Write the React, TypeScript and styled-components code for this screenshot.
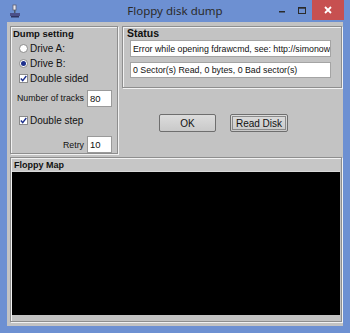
import React from "react";
import styled, { createGlobalStyle } from "styled-components";

const GlobalStyle = createGlobalStyle`
  html, body {
    margin: 0;
    padding: 0;
    background: #6b8ed0;
  }
  * {
    box-sizing: border-box;
  }
`;

const Window = styled.div`
  width: 350px;
  height: 333px;
  background: #6d90d2;
  display: flex;
  flex-direction: column;
  font-family: "Liberation Sans", Arial, sans-serif;
  color: #111;
  overflow: hidden;
  white-space: nowrap;
`;

const TitleBar = styled.div`
  height: 22px;
  display: flex;
  align-items: center;
  position: relative;
  padding-left: 9px;
`;

const Title = styled.div`
  position: absolute;
  left: 0;
  right: 0;
  top: 3px;
  text-align: center;
  font-family: "Noto Sans", "Open Sans", sans-serif;
  font-size: 11.5px;
  color: #2a2a2a;
  pointer-events: none;
`;

const Controls = styled.div`
  margin-left: auto;
  margin-right: 6px;
  display: flex;
  align-self: flex-start;
  align-items: flex-start;
`;

const CtrlButton = styled.div<{ $close?: boolean }>`
  width: ${({ $close }) => ($close ? "32px" : "20px")};
  height: 20px;
  display: flex;
  align-items: center;
  justify-content: center;
  background: ${({ $close }) => ($close ? "#c75050" : "transparent")};
`;

const Client = styled.div`
  flex: 1;
  margin: 0 7px 7px 7px;
  background: #c3c3c3;
  display: flex;
  flex-direction: column;
  padding: 4px 1px 4px 3px;
`;

const TopRow = styled.div`
  display: flex;
  gap: 4px;
`;

const Panel = styled.div<{ $w?: number; $h: number }>`
  width: ${({ $w }) => ($w ? `${$w}px` : "auto")};
  flex-shrink: 0;
  height: ${({ $h }) => $h}px;
  border: 1px solid #8e8e8e;
  box-shadow: inset 1px 1px 0 #f2f2f2, 1px 1px 0 #f2f2f2;
  display: flex;
  flex-direction: column;
  overflow: hidden;
`;

const PanelTitle = styled.div<{ $size?: number }>`
  font-weight: bold;
  font-size: ${({ $size }) => $size ?? 9.5}px;
  line-height: 11px;
  height: 12px;
  padding: 1px 0 0 2px;
  color: #111;
`;

const OptionRow = styled.div<{ $top?: number }>`
  height: 15px;
  margin-top: ${({ $top }) => $top ?? 0}px;
  display: flex;
  align-items: center;
  gap: 2px;
  padding-left: 8px;
  font-size: 10px;
`;

const Radio = styled.span<{ $on?: boolean }>`
  width: 9px;
  height: 9px;
  border-radius: 50%;
  background: #fff;
  border: 1px solid #8a8a8a;
  display: flex;
  align-items: center;
  justify-content: center;
  &::after {
    content: "";
    width: 5px;
    height: 5px;
    border-radius: 50%;
    background: ${({ $on }) => ($on ? "#1c2f8c" : "transparent")};
  }
`;

const Check = styled.span`
  width: 9px;
  height: 9px;
  background: #fff;
  border: 1px solid #8a8a8a;
  display: flex;
  align-items: center;
  justify-content: center;
`;

const FieldRow = styled.div<{ $top: number; $h: number }>`
  margin-top: ${({ $top }) => $top}px;
  height: ${({ $h }) => $h}px;
  display: flex;
  justify-content: flex-end;
  align-items: center;
  gap: 3px;
  padding-right: 5px;
  font-size: 8.8px;
`;

const NumInput = styled.div`
  width: 25px;
  height: 100%;
  background: #fff;
  border: 1px solid #9a9a9a;
  display: flex;
  align-items: center;
  padding-left: 2px;
  font-size: 9.5px;
`;

const RightCol = styled.div`
  flex: 1;
  min-width: 0;
  display: flex;
  flex-direction: column;
`;

const StatusTitle = styled(PanelTitle)`
  padding: 1px 0 0 4px;
  height: 13px;
`;

const TextField = styled.div<{ $top: number; $h: number }>`
  margin: ${({ $top }) => $top}px 10px 0 7px;
  height: ${({ $h }) => $h}px;
  background: #fff;
  border: 1px solid #a4a4a4;
  display: flex;
  align-items: center;
  padding-left: 2px;
  font-size: 8.8px;
  overflow: hidden;
`;

const ButtonRow = styled.div`
  margin-top: 26px;
  padding-left: 37px;
  display: flex;
  gap: 14px;
`;

const Button = styled.div<{ $focus?: boolean }>`
  width: ${({ $focus }) => ($focus ? 58 : 57)}px;
  height: 18px;
  border: 1px solid #6e6e6e;
  border-radius: 2px;
  background: linear-gradient(#dcdcdc, #c9c9c9);
  display: flex;
  align-items: center;
  justify-content: center;
  font-size: 10px;
  padding: 1px;
  & > span {
    flex: 1;
    align-self: stretch;
    display: flex;
    align-items: center;
    justify-content: center;
    border: 1px solid ${({ $focus }) => ($focus ? "#8a8a8a" : "transparent")};
  }
`;

const MapPanel = styled.div`
  flex: 1;
  margin-top: 3px;
  border: 1px solid #8e8e8e;
  box-shadow: inset 1px 1px 0 #f2f2f2, 1px 1px 0 #f2f2f2;
  display: flex;
  flex-direction: column;
  padding: 1px 1px 6px 1px;
`;

const MapTitle = styled.div`
  height: 13px;
  font-weight: bold;
  font-size: 9px;
  line-height: 12px;
  padding-left: 2px;
  background: #c6c6c6;
  border-bottom: 1px solid #d8d8d8;
`;

const MapCanvas = styled.div`
  flex: 1;
  background: #000;
`;

function AppIcon() {
  return (
    <svg width="12" height="14" viewBox="0 0 12 14">
      <rect x="4" y="1" width="3" height="5" fill="#e8e8f0" stroke="#606070" strokeWidth="0.8" />
      <rect x="5" y="6" width="1.5" height="3" fill="#505868" />
      <path d="M1 9 h10 v3 h-10 z" fill="#4a4f8a" />
      <rect x="2" y="12" width="8" height="1.5" fill="#2e3260" />
    </svg>
  );
}

function CheckMark() {
  return (
    <svg width="7" height="7" viewBox="0 0 7 7">
      <path d="M0.8 3.6 L2.7 5.6 L6.3 1" fill="none" stroke="#1c2f8c" strokeWidth="1.4" />
    </svg>
  );
}

export default function App() {
  return (
    <>
      <GlobalStyle />
      <Window>
        <TitleBar>
          <AppIcon />
          <Title>Floppy disk dump</Title>
          <Controls>
            <CtrlButton>
              <svg width="6" height="6" viewBox="0 0 6 6">
                <rect x="0" y="4" width="6" height="1.5" fill="#2b2b2b" />
              </svg>
            </CtrlButton>
            <CtrlButton>
              <svg width="8" height="7" viewBox="0 0 8 7">
                <rect x="0.5" y="0.5" width="7" height="6" fill="none" stroke="#2b2b2b" />
                <rect x="0.5" y="0.5" width="7" height="1.2" fill="#2b2b2b" />
              </svg>
            </CtrlButton>
            <CtrlButton $close>
              <svg width="8" height="8" viewBox="0 0 8 8">
                <path d="M1 1 L7 7 M7 1 L1 7" stroke="#fff" strokeWidth="1.8" />
              </svg>
            </CtrlButton>
          </Controls>
        </TitleBar>
        <Client>
          <TopRow>
            <Panel $w={108} $h={128}>
              <PanelTitle>Dump setting</PanelTitle>
              <OptionRow $top={2}>
                <Radio />
                Drive A:
              </OptionRow>
              <OptionRow>
                <Radio $on />
                Drive B:
              </OptionRow>
              <OptionRow>
                <Check>
                  <CheckMark />
                </Check>
                Double sided
              </OptionRow>
              <FieldRow $top={4} $h={18}>
                Number of tracks
                <NumInput>80</NumInput>
              </FieldRow>
              <OptionRow $top={6}>
                <Check>
                  <CheckMark />
                </Check>
                Double step
              </OptionRow>
              <FieldRow $top={8} $h={17}>
                Retry
                <NumInput>10</NumInput>
              </FieldRow>
            </Panel>
            <RightCol>
              <Panel $h={62}>
                <StatusTitle $size={10.5}>Status</StatusTitle>
                <TextField $top={0} $h={17}>
                  Error while opening fdrawcmd, see: http://simonowen.com/fdrawcmd
                </TextField>
                <TextField $top={5} $h={16}>
                  0 Sector(s) Read, 0 bytes, 0 Bad sector(s)
                </TextField>
              </Panel>
              <ButtonRow>
                <Button>
                  <span>OK</span>
                </Button>
                <Button $focus>
                  <span>Read Disk</span>
                </Button>
              </ButtonRow>
            </RightCol>
          </TopRow>
          <MapPanel>
            <MapTitle>Floppy Map</MapTitle>
            <MapCanvas />
          </MapPanel>
        </Client>
      </Window>
    </>
  );
}
